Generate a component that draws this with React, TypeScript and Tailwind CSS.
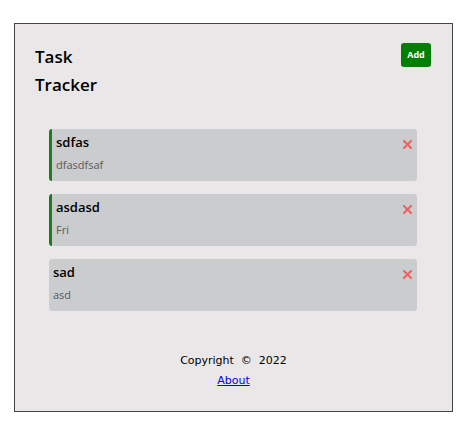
import React from "react";

type Task = { id: number; text: string; day: string; reminder: boolean };

const tasks: Task[] = [
  { id: 1, text: "sdfas", day: "dfasdfsaf", reminder: true },
  { id: 2, text: "asdasd", day: "Fri", reminder: true },
  { id: 3, text: "sad", day: "asd", reminder: false },
];

function XIcon() {
  return (
    <svg width="9" height="9" viewBox="0 0 9 9" className="mt-[4px]">
      <path d="M1 1 L8 8 M8 1 L1 8" stroke="#ee6464" strokeWidth="2.2" strokeLinecap="square" />
    </svg>
  );
}

function TaskCard({ task }: { task: Task }) {
  return (
    <div
      className={
        task.reminder
          ? "w-[368px] h-[52px] rounded-[3px] bg-[#cbcccd] border-l-[3px] border-[#1a7f1a] pl-[4px] pr-[5px] pt-[4px]"
          : "w-[368px] h-[52px] rounded-[3px] bg-[#cbcccd] pl-[4px] pr-[5px] pt-[4px]"
      }
    >
      <div className="flex justify-between items-center h-[18px]">
        <h3 className="text-[13px] leading-[18px] font-semibold text-black">{task.text}</h3>
        <XIcon />
      </div>
      <p className="mt-[6px] text-[11px] leading-[16px] text-[#5a5a5a]">{task.day}</p>
    </div>
  );
}

export default function App() {
  return (
    <div className="pt-[23px] pl-[14px] bg-white min-h-[439px]" style={{ fontFamily: '"Open Sans", sans-serif' }}>
      <div className="w-[439px] h-[389px] border border-[#444444] bg-[#e9e7e8] flex flex-col">
        <header className="flex justify-between items-start pl-[20px] pr-[21px] pt-[19px]">
          <h1 className="w-[70px] text-[17px] leading-[28px] font-semibold text-black">Task Tracker</h1>
          <button className="w-[30px] h-[24px] rounded-[3px] bg-[#008000] text-white text-[9px] font-bold">
            Add
          </button>
        </header>
        <div className="mt-[30px] ml-[34px] flex flex-col gap-[13px]">
          {tasks.map((t) => (
            <TaskCard key={t.id} task={t} />
          ))}
        </div>
        <footer
          className="mt-[40px] flex flex-col items-center text-[11px] leading-[20px] text-black"
          style={{ fontFamily: '"DejaVu Sans", sans-serif' }}
        >
          <p>Copyright&nbsp; ©&nbsp; 2022</p>
          <a href="#" className="text-[#0000ee] underline">
            About
          </a>
        </footer>
      </div>
    </div>
  );
}
